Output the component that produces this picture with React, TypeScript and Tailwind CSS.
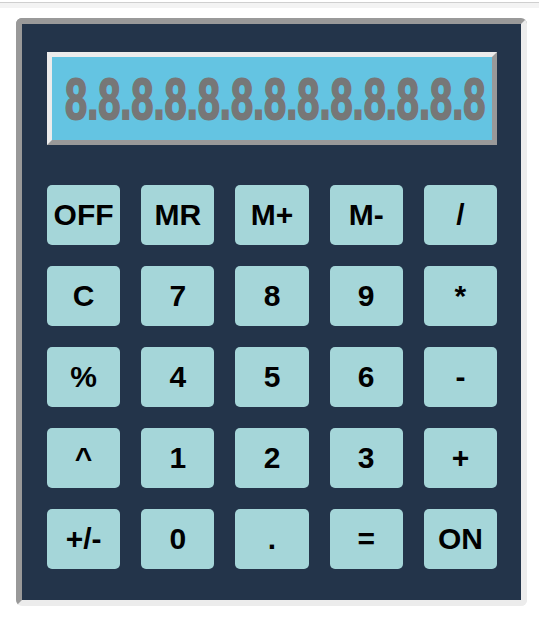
const KEYS = [
  "OFF", "MR", "M+", "M-", "/",
  "C", "7", "8", "9", "*",
  "%", "4", "5", "6", "-",
  "^", "1", "2", "3", "+",
  "+/-", "0", ".", "=", "ON",
];

const DISPLAY = "8.8.8.8.8.8.8.8.8.8.8.8.8";

function Key({ label }: { label: string }) {
  return (
    <button
      type="button"
      className="h-[60px] rounded-[5px] bg-[#a5d6d9] text-[30px] font-bold leading-none text-black [font-family:'Liberation_Sans',Arial,sans-serif] flex items-center justify-center"
    >
      {label}
    </button>
  );
}

export default function App() {
  return (
    <div className="min-h-screen bg-white">
      {/* thin strip along the top of the page */}
      <div className="mt-[2px] h-[6px] border-t border-[#cfcfcf] bg-[#f3f3f3]" />

      <div className="ml-[16px] mt-[10px] w-[511px] rounded-[6px] border-[6px] border-t-[#999999] border-l-[#999999] border-r-[#ececec] border-b-[#ececec] bg-[#23344a] pl-[25px] pr-[24px] pt-[28px] pb-[31px]">
        {/* readout: squeezed bold digits */}
        <div className="h-[93px] w-[450px] border-[5px] border-t-[#ececec] border-l-[#ececec] border-r-[#999999] border-b-[#999999] bg-[#64c4e2] flex items-center overflow-hidden pl-[13px]">
          <span className="inline-block shrink-0 origin-left whitespace-nowrap text-[46px] font-bold leading-none text-[#777777] scale-x-[0.865] scale-y-[1.245] [-webkit-text-stroke:1.5px_#777777] [font-family:'Liberation_Sans',Arial,sans-serif]">
            {DISPLAY}
          </span>
        </div>

        {/* keypad */}
        <div className="mt-[40px] grid grid-cols-5 gap-x-[21px] gap-y-[21px]">
          {KEYS.map((k) => (
            <Key key={k} label={k} />
          ))}
        </div>
      </div>
    </div>
  );
}
